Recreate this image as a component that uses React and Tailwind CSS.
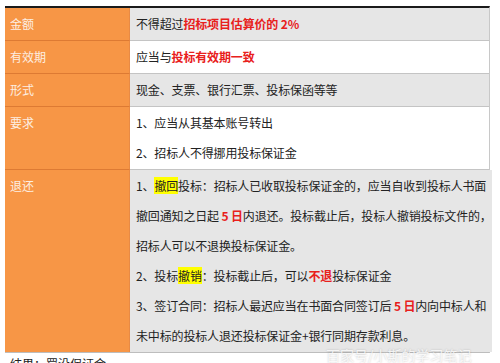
import React from "react";

const Red = ({ children }) => <span className="font-bold text-[#e8201c]">{children}</span>;
const Mark = ({ children }) => <span className="bg-[#ffff00]">{children}</span>;

const ROWS = [
    {
        label: "金额",
        gray: true,
        lines: [
            <>
                不得超过<Red>招标项目估算价的 2%</Red>
            </>,
        ],
    },
    {
        label: "有效期",
        lines: [
            <>
                应当与<Red>投标有效期一致</Red>
            </>,
        ],
    },
    {
        label: "形式",
        gray: true,
        lines: ["现金、支票、银行汇票、投标保函等等"],
    },
    {
        label: "要求",
        lines: ["1、应当从其基本账号转出", "2、招标人不得挪用投标保证金"],
    },
    {
        label: "退还",
        gray: true,
        lines: [
            <>
                1、<Mark>撤回</Mark>投标：招标人已收取投标保证金的，应当自收到投标人书面
            </>,
            <>
                撤回通知之日起 <Red>5 日</Red>内退还。投标截止后，投标人撤销投标文件的，
            </>,
            "招标人可以不退换投标保证金。",
            <>
                2、投标<Mark>撤销</Mark>：投标截止后，可以<Red>不退</Red>投标保证金
            </>,
            <>
                3、签订合同：招标人最迟应当在书面合同签订后 <Red>5 日</Red>内向中标人和
            </>,
            "未中标的投标人退还投标保证金+银行同期存款利息。",
        ],
    },
];

export default function App() {
    return (
        <div
            className="relative w-[500px] h-[363px] overflow-hidden bg-white pt-[6px] text-[12px] text-[#222]"
            style={{ fontFamily: '"Noto Sans CJK SC", "Noto Sans", sans-serif' }}
        >
            <div className="ml-[5px] w-[485px] border-t-2 border-[#1a1a1a] border-r border-r-[#c8c8c8] border-b border-b-[#bdbdbd]">
                {ROWS.map((row, i) => (
                    <div
                        key={row.label}
                        className={`flex ${i < ROWS.length - 1 ? "border-b" : ""} border-[#c4c4c4]`}
                    >
                        <div
                            className={`w-[125px] shrink-0 bg-[#f79646] pl-[5px] py-px leading-[30px] text-[#fdeee2] ${
                                i < ROWS.length - 1 ? "-mb-px border-b border-[#dd7a33]" : ""
                            } border-r border-r-[#e88a45]`}
                        >
                            {row.label}
                        </div>
                        <div
                            className={`flex-1 pl-[6px] py-px leading-[30px] whitespace-nowrap tracking-[-0.15px] ${
                                row.gray ? "bg-[#e6e6e6]" : "bg-white"
                            }`}
                        >
                            {row.lines.map((line, j) => (
                                <div key={j}>{line}</div>
                            ))}
                        </div>
                    </div>
                ))}
            </div>
            <div className="pl-[10px] pt-[3px] leading-[16px] text-[#222]">结果：罚没保证金</div>
            <div className="absolute left-[326px] top-[345px] text-[14px] text-white/80 [text-shadow:0_0_2px_rgba(0,0,0,0.25)] whitespace-nowrap">
                百家号/小斯的学习笔记
            </div>
        </div>
    );
}
